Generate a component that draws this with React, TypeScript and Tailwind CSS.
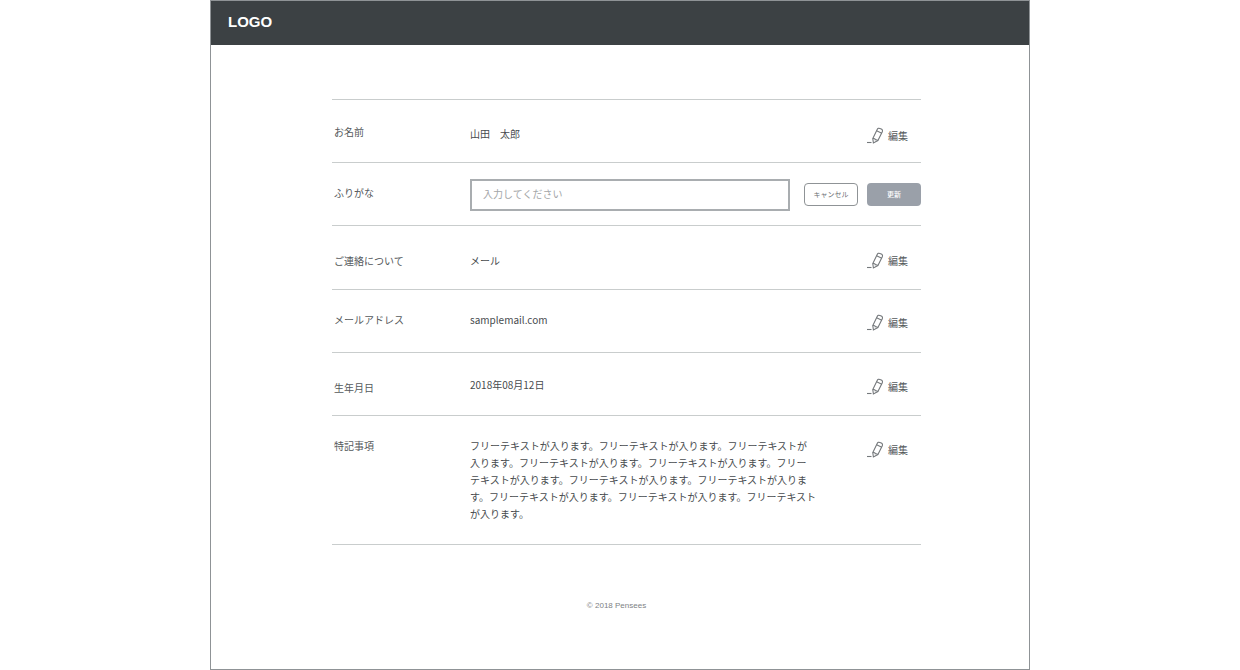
const cjk = "font-['Noto_Sans_CJK_JP',sans-serif]";

const note = [
  "フリーテキストが入ります。フリーテキストが入ります。フリーテキストが",
  "入ります。フリーテキストが入ります。フリーテキストが入ります。フリー",
  "テキストが入ります。フリーテキストが入ります。フリーテキストが入りま",
  "す。フリーテキストが入ります。フリーテキストが入ります。フリーテキスト",
  "が入ります。",
];

function PencilIcon() {
  return (
    <svg width="18" height="17" viewBox="0 0 18 17" fill="none" stroke="#75797c" strokeWidth="1.1">
      <path d="M0 15.5H4.5" />
      <path d="M6.4 16L5.8 11.6L10.2 2.4C10.7 1.3 11.7 0.9 12.8 1.4L14.3 2.1C15.4 2.6 15.8 3.6 15.3 4.7L10.9 13.6L6.4 16Z" />
      <path d="M9.6 3.8L14.8 6.2" />
      <path d="M5.8 11.6C7.4 11.4 8.2 11.8 8.3 12.8C9.3 12.5 10.2 12.8 10.9 13.6" />
    </svg>
  );
}

function EditLink({ className }: { className: string }) {
  return (
    <div className={`ml-auto mr-[13px] flex w-[41px] shrink-0 items-center gap-[3px] text-[10px] leading-[17px] text-[#55595c] ${className}`}>
      <PencilIcon />
      <span className="whitespace-nowrap">編集</span>
    </div>
  );
}

function Row({
  label,
  value,
  labelClass,
  valueClass,
  editClass,
  height,
}: {
  label: string;
  value: string;
  labelClass: string;
  valueClass: string;
  editClass: string;
  height: string;
}) {
  return (
    <div className={`flex items-start border-b border-[#c9cdcd] ${height}`}>
      <div className={`ml-[2px] w-[136px] shrink-0 text-[10px] leading-[14px] text-[#55595c] ${labelClass}`}>{label}</div>
      <div className={`text-[10px] leading-[14px] whitespace-pre text-[#474b4e] ${valueClass}`}>{value}</div>
      <EditLink className={editClass} />
    </div>
  );
}

export default function App() {
  return (
    <div className={`h-[670px] w-[1240px] bg-white ${cjk}`}>
      <div className="mx-auto h-[670px] w-[820px] border border-[#8f9396] bg-white">
        <header className="flex h-[44px] items-center bg-[#3c4144] pb-[2px] pl-[17px]">
          <span className="font-['Liberation_Sans',sans-serif] text-[15px] font-bold text-white">LOGO</span>
        </header>

        <main className="mt-[54px] ml-[121px] w-[589px]">
          <div className="border-t border-[#c9cdcd]" />
          <Row label="お名前" value="山田　太郎" height="h-[63px]" labelClass="pt-[25px]" valueClass="pt-[27px]" editClass="pt-[27px]" />

          <div className="flex h-[63px] items-start border-b border-[#c9cdcd]">
            <div className="ml-[2px] w-[136px] shrink-0 pt-[23px] text-[10px] leading-[14px] text-[#55595c]">ふりがな</div>
            <input
              placeholder="入力してください"
              className="mt-[16px] h-[32px] w-[320px] shrink-0 border-2 border-[#a9adb0] px-[11px] pb-[3px] text-[10px] outline-none placeholder:text-[#a3a6a8]"
            />
            <button className="mt-[20px] ml-[14px] h-[23px] w-[54px] rounded-[4px] border border-[#8f9396] bg-white text-[7px] text-[#6b6f72]">キャンセル</button>
            <button className="mt-[20px] ml-[9px] h-[23px] w-[54px] rounded-[4px] bg-[#9aa0a9] text-[7px] font-medium text-white">更新</button>
          </div>

          <Row label="ご連絡について" value="メール" height="h-[64px]" labelClass="pt-[28px]" valueClass="pt-[28px]" editClass="pt-[26px]" />
          <Row label="メールアドレス" value="samplemail.com" height="h-[63px]" labelClass="pt-[23px]" valueClass="pt-[23px]" editClass="pt-[24px]" />
          <Row label="生年月日" value="2018年08月12日" height="h-[63px]" labelClass="pt-[28px]" valueClass="pt-[25px]" editClass="pt-[25px]" />

          <div className="flex h-[129px] items-start border-b border-[#c9cdcd]">
            <div className="ml-[2px] w-[136px] shrink-0 pt-[23px] text-[10px] leading-[14px] text-[#55595c]">特記事項</div>
            <div className="pt-[21px] text-[10px] leading-[17px] whitespace-nowrap text-[#474b4e]">
              {note.map((line) => (
                <div key={line}>{line}</div>
              ))}
            </div>
            <EditLink className="pt-[25px]" />
          </div>
        </main>

        <footer className="mt-[56px] pr-[7px] text-center font-['Liberation_Sans',sans-serif] text-[8px] leading-[10px] text-[#7d8184]">© 2018 Pensees</footer>
      </div>
    </div>
  );
}
